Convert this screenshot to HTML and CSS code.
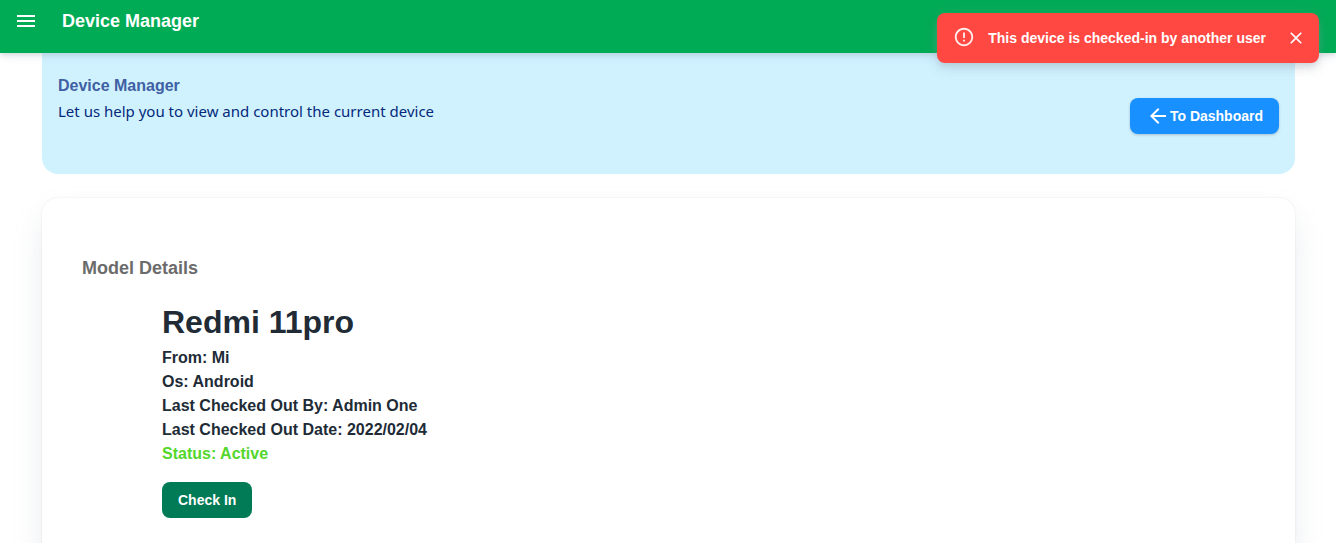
FILE: index.html
```html
<!DOCTYPE html>
<html lang="en">
<head>
<meta charset="utf-8">
<meta name="viewport" content="width=device-width, initial-scale=1">
<title>Device Manager</title>
<link rel="stylesheet" href="styles.css">
</head>
<body>
<header class="app-bar">
  <button class="icon-button" type="button" aria-label="Open menu">
    <svg class="icon" viewBox="0 0 24 24"><path d="M3 18h18v-2H3v2zm0-5h18v-2H3v2zm0-7v2h18V6H3z"/></svg>
  </button>
  <div class="app-title">Device Manager</div>
</header>
<div class="toast" role="alert">
  <svg class="toast-icon" viewBox="0 0 24 24"><path d="M11 15h2v2h-2zm0-8h2v6h-2zm.99-5C6.47 2 2 6.48 2 12s4.47 10 9.99 10C17.52 22 22 17.52 22 12S17.52 2 11.99 2zM12 20c-4.42 0-8-3.58-8-8s3.58-8 8-8 8 3.58 8 8-3.58 8-8 8z"/></svg>
  <span class="toast-text">This device is checked-in by another user</span>
  <button class="icon-button" type="button" aria-label="Close">
    <svg class="close-icon" viewBox="0 0 24 24"><path d="M19 6.41L17.59 5 12 10.59 6.41 5 5 6.41 10.59 12 5 17.59 6.41 19 12 13.41 17.59 19 19 17.59 13.41 12z"/></svg>
  </button>
</div>
<main class="page">
  <section class="banner">
    <div class="banner-copy">
      <h1 class="banner-title">Device Manager</h1>
      <p class="banner-text">Let us help you to view and control the current device</p>
    </div>
    <a class="button button-primary" href="#dashboard">
      <svg class="icon" viewBox="0 0 24 24"><path d="M20 11H7.83l5.59-5.59L12 4l-8 8 8 8 1.41-1.41L7.83 13H20v-2z"/></svg>
      To Dashboard
    </a>
  </section>
  <section class="card">
    <h2 class="card-title">Model Details</h2>
    <div class="details">
      <h3 class="model">Redmi 11pro</h3>
      <p class="detail">From: Mi</p>
      <p class="detail">Os: Android</p>
      <p class="detail">Last Checked Out By: Admin One</p>
      <p class="detail">Last Checked Out Date: 2022/02/04</p>
      <p class="detail status">Status: Active</p>
      <button class="button button-check" type="button">Check In</button>
    </div>
  </section>
</main>
</body>
</html>
```
FILE: styles.css
```css
* {
  box-sizing: border-box;
}

body {
  margin: 0;
  background: #fff;
  color: #212b36;
  font-family: "Liberation Sans", Arial, sans-serif;
  font-size: 16px;
  line-height: 24px;
  overflow: hidden;
}

h1, h2, h3, p {
  margin: 0;
}

.icon-button {
  display: flex;
  padding: 0;
  border: 0;
  background: none;
  color: inherit;
  cursor: pointer;
}

svg {
  flex: none;
  fill: currentColor;
}

.icon {
  width: 24px;
  height: 24px;
}

.app-bar {
  position: relative;
  z-index: 1;
  display: flex;
  gap: 24px;
  padding: 9px 14px 20px;
  background: #00ab55;
  color: #fff;
  box-shadow: 0 2px 4px -1px rgba(145, 158, 171, 0.2), 0 4px 5px rgba(145, 158, 171, 0.14), 0 1px 10px rgba(145, 158, 171, 0.12);
}

.app-title {
  font-size: 18px;
  font-weight: 700;
}

.toast {
  position: absolute;
  z-index: 2;
  top: 13px;
  right: 17px;
  display: flex;
  align-items: center;
  height: 50px;
  padding: 0 13px 0 16px;
  border-radius: 8px;
  background: #ff4842;
  color: #fff;
  box-shadow: 0 3px 5px -1px rgba(145, 158, 171, 0.2), 0 6px 10px rgba(145, 158, 171, 0.24), 0 1px 18px rgba(145, 158, 171, 0.12);
}

.toast-icon {
  width: 22px;
  height: 22px;
  margin: 0 13px 2px 0;
  opacity: 0.9;
}

.toast-text {
  margin-right: 20px;
  font-size: 14px;
  font-weight: 700;
}

.close-icon {
  width: 20px;
  height: 20px;
}

.page {
  padding: 0 41px 0 42px;
}

.banner {
  display: flex;
  justify-content: space-between;
  align-items: flex-start;
  padding: 20px 16px 40px;
  border-radius: 0 0 16px 16px;
  background: #d0f2ff;
}

.banner-title {
  color: #4060a3;
  font-size: 16px;
  line-height: 26px;
}

.banner-text {
  color: #04297a;
  font-family: "Noto Sans", "Open Sans", sans-serif;
  font-size: 15px;
  line-height: 24px;
}

.button {
  display: inline-flex;
  align-items: center;
  height: 36px;
  padding: 0 16px;
  border: 0;
  border-radius: 8px;
  color: #fff;
  font-family: inherit;
  font-size: 14px;
  font-weight: 700;
  line-height: 24px;
  text-decoration: none;
  cursor: pointer;
}

.button-primary {
  margin: 25px 0 0;
  background: #1890ff;
  box-shadow: 0 1px 3px rgba(0, 0, 0, 0.2);
}

.button-check {
  margin-top: 16px;
  background: #007b55;
}

.card {
  margin-top: 24px;
  padding: 58px 40px 40px;
  border-radius: 16px;
  background: #fff;
  box-shadow: 0 0 2px rgba(145, 158, 171, 0.24), 0 16px 32px -4px rgba(145, 158, 171, 0.24);
}

.card-title {
  color: #6b6b6b;
  font-size: 18px;
  line-height: 24px;
}

.details {
  padding: 18px 80px 0;
}

.model {
  font-size: 32px;
  line-height: 48px;
}

.detail {
  font-weight: 700;
}

.status {
  color: #54d62c;
}
```
